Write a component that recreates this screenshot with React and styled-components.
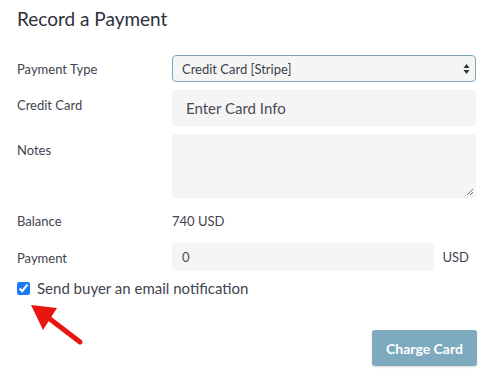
import styled, { createGlobalStyle } from 'styled-components';

const GlobalStyle = createGlobalStyle`
  html, body { margin: 0; padding: 0; background: #fff; }
  body { font-family: Lato, 'Liberation Sans', sans-serif; color: #41444f; }
`;

const Page = styled.div`
  position: relative;
  width: 485px;
  height: 376px;
  box-sizing: border-box;
  padding: 7px 9px 0 17px;
`;

const Title = styled.h2`
  margin: 0;
  font-size: 19px;
  font-weight: 400;
  line-height: 24px;
  color: #2e3038;
`;

const Form = styled.div`
  margin-top: 24px;
  display: grid;
  grid-template-columns: 155px 1fr;
  row-gap: 8px;
  align-items: start;
`;

const Label = styled.div`
  font-size: 13px;
  line-height: 16px;
  padding-top: ${p => p.$top || 7}px;
  padding-bottom: ${p => p.$bottom || 0}px;
`;

const Select = styled.div`
  height: 27px;
  box-sizing: border-box;
  border: 1px solid #7ea7bd;
  border-radius: 4px;
  background: #f5f5f6;
  display: flex;
  align-items: center;
  justify-content: space-between;
  padding: 0 5px 0 9px;
  font-size: 13px;
  color: #3c3f48;
`;

const Field = styled.div`
  height: ${p => p.$h}px;
  box-sizing: border-box;
  background: #f5f5f5;
  border-radius: 3px;
  display: flex;
  align-items: center;
  padding-left: ${p => p.$pad || 14}px;
  font-size: ${p => p.$size || 15}px;
  color: #4a4c55;
  position: relative;
`;

const Grip = styled.svg`
  position: absolute;
  right: 2px;
  bottom: 2px;
`;

const Value = styled.div`
  font-size: 13px;
  line-height: 16px;
  padding-top: 7px;
  padding-bottom: 6px;
`;

const PayRow = styled.div`
  display: flex;
  align-items: center;
  gap: 8px;
  padding-right: 7px;
`;

const Unit = styled.span`
  font-size: 13px;
`;

const CheckRow = styled.label`
  display: flex;
  align-items: center;
  gap: 7px;
  margin-top: 8px;
  font-size: 15px;
  color: #41444f;
`;

const Check = styled.input`
  margin: 0;
  width: 13px;
  height: 13px;
  accent-color: #1a7cf5;
`;

const Footer = styled.div`
  display: flex;
  justify-content: flex-end;
  margin-top: 33px;
`;

const Button = styled.button`
  width: 105px;
  height: 36px;
  border: none;
  border-radius: 3px;
  background: #7eaabf;
  color: #fff;
  font-family: Lato, 'Liberation Sans', sans-serif;
  font-weight: 700;
  font-size: 14px;
  box-shadow: 0 1px 2px rgba(0,0,0,0.15);
  margin-right: -1px;
`;

const Arrow = styled.svg`
  position: absolute;
  left: 28px;
  top: 302px;
`;

export default function App() {
  return (
    <Page>
      <GlobalStyle />
      <Title>Record a Payment</Title>
      <Form>
        <Label $top={6}>Payment Type</Label>
        <Select>
          <span>Credit Card [Stripe]</span>
          <svg width="7" height="12" viewBox="0 0 7 12">
            <path d="M3.5 1 L6.5 5 H0.5 Z M3.5 11 L6.5 7 H0.5 Z" fill="#333" />
          </svg>
        </Select>
        <Label>Credit Card</Label>
        <Field $h={36}>Enter Card Info</Field>
        <Label $top={8}>Notes</Label>
        <Field $h={64}>
          <Grip width="8" height="8" viewBox="0 0 8 8">
            <path d="M7 1 L1 7 M7 4 L4 7" stroke="#777" strokeWidth="1" />
          </Grip>
        </Field>
        <Label $top={7} $bottom={6}>Balance</Label>
        <Value>740 USD</Value>
        <Label $top={7}>Payment</Label>
        <PayRow>
          <Field $h={28} $pad={10} $size={13} style={{ flex: 1 }}>0</Field>
          <Unit>USD</Unit>
        </PayRow>
      </Form>
      <CheckRow>
        <Check type="checkbox" defaultChecked />
        Send buyer an email notification
      </CheckRow>
      <Footer>
        <Button>Charge Card</Button>
      </Footer>
      <Arrow width="60" height="45" viewBox="0 0 60 45">
        <path d="M3 3 L29 6 L15 28 Z" fill="#e8160f" />
        <path d="M18 14 L52 40" stroke="#e8160f" strokeWidth="5" strokeLinecap="round" />
      </Arrow>
    </Page>
  );
}
